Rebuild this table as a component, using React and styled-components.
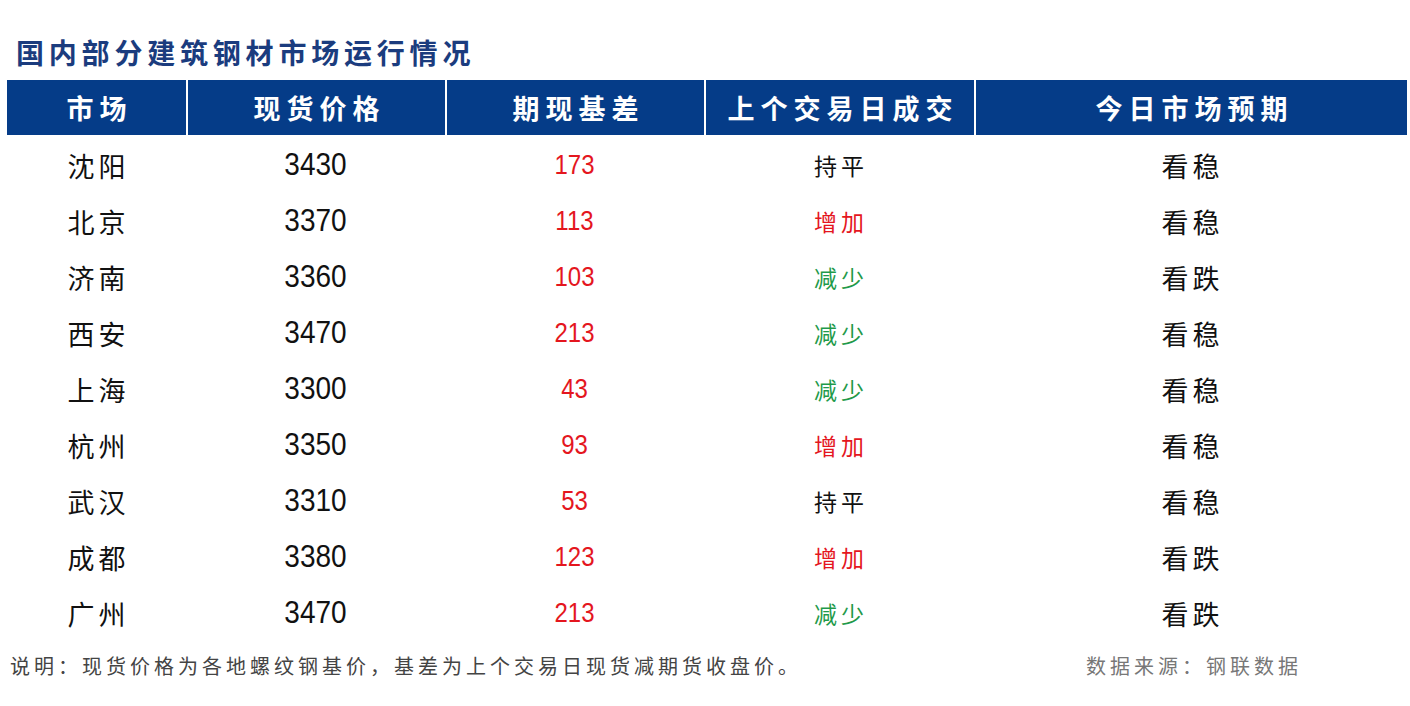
import styled, { createGlobalStyle } from "styled-components";

const GlobalStyle = createGlobalStyle`
  body {
    margin: 0;
    background: #ffffff;
    font-family: "Noto Sans CJK SC", "Noto Sans", sans-serif;
  }
`;

const Page = styled.div`
  width: 1410px;
  height: 706px;
  padding-top: 34px;
  box-sizing: border-box;
`;

const Title = styled.h1`
  margin: 0 0 0 16px;
  height: 46px;
  font-size: 28px;
  font-weight: 700;
  letter-spacing: 4.8px;
  line-height: 36px;
  color: #1b3c7e;
`;

const Table = styled.div`
  margin-left: 7px;
  width: 1400px;
  display: grid;
  grid-template-columns: 179px 259px 259px 270px 433px;
`;

const HeadCell = styled.div`
  height: 55px;
  background: #053c88;
  color: #ffffff;
  display: flex;
  align-items: center;
  justify-content: center;
  font-size: 27px;
  font-weight: 700;
  letter-spacing: 6px;
  padding-left: 6px;
  box-sizing: border-box;
  border-left: ${(p) => (p.$first ? "none" : "2px solid #ffffff")};
`;

const Cell = styled.div`
  height: 56px;
  display: flex;
  align-items: center;
  justify-content: center;
  color: ${(p) => p.$color || "#111111"};
  font-size: ${(p) => p.$size || 27}px;
  letter-spacing: 4px;
  padding: 4px 0 0 4px;
  box-sizing: border-box;
`;

const Num = styled.span`
  display: inline-block;
  font-family: "Liberation Sans", Arial, sans-serif;
  letter-spacing: 0;
  margin-left: -4px;
  transform: scaleY(1.12);
`;

const Footer = styled.div`
  display: flex;
  justify-content: space-between;
  margin-top: 12px;
  padding: 0 108px 0 10px;
  font-size: 20px;
  letter-spacing: 4px;
`;

const Note = styled.span`
  color: ${(p) => p.$color};
`;

const RED = "#e4161e";
const GREEN = "#1f9a4a";

const trendColor = {
  持平: "#111111",
  增加: RED,
  减少: GREEN,
};

const rows = [
  ["沈阳", "3430", "173", "持平", "看稳"],
  ["北京", "3370", "113", "增加", "看稳"],
  ["济南", "3360", "103", "减少", "看跌"],
  ["西安", "3470", "213", "减少", "看稳"],
  ["上海", "3300", "43", "减少", "看稳"],
  ["杭州", "3350", "93", "增加", "看稳"],
  ["武汉", "3310", "53", "持平", "看稳"],
  ["成都", "3380", "123", "增加", "看跌"],
  ["广州", "3470", "213", "减少", "看跌"],
];

const headers = ["市场", "现货价格", "期现基差", "上个交易日成交", "今日市场预期"];

export default function App() {
  return (
    <Page>
      <GlobalStyle />
      <Title>国内部分建筑钢材市场运行情况</Title>
      <Table>
        {headers.map((h, i) => (
          <HeadCell key={h} $first={i === 0}>
            {h}
          </HeadCell>
        ))}
        {rows.map((r) => [
          <Cell key={r[0] + "a"}>{r[0]}</Cell>,
          <Cell key={r[0] + "b"} $size={28}>
            <Num>{r[1]}</Num>
          </Cell>,
          <Cell key={r[0] + "c"} $size={24} $color={RED}>
            <Num>{r[2]}</Num>
          </Cell>,
          <Cell key={r[0] + "d"} $size={23} $color={trendColor[r[3]]}>
            {r[3]}
          </Cell>,
          <Cell key={r[0] + "e"}>{r[4]}</Cell>,
        ])}
      </Table>
      <Footer>
        <Note $color="#444444">
          说明：现货价格为各地螺纹钢基价，基差为上个交易日现货减期货收盘价。
        </Note>
        <Note $color="#777777">数据来源：钢联数据</Note>
      </Footer>
    </Page>
  );
}
